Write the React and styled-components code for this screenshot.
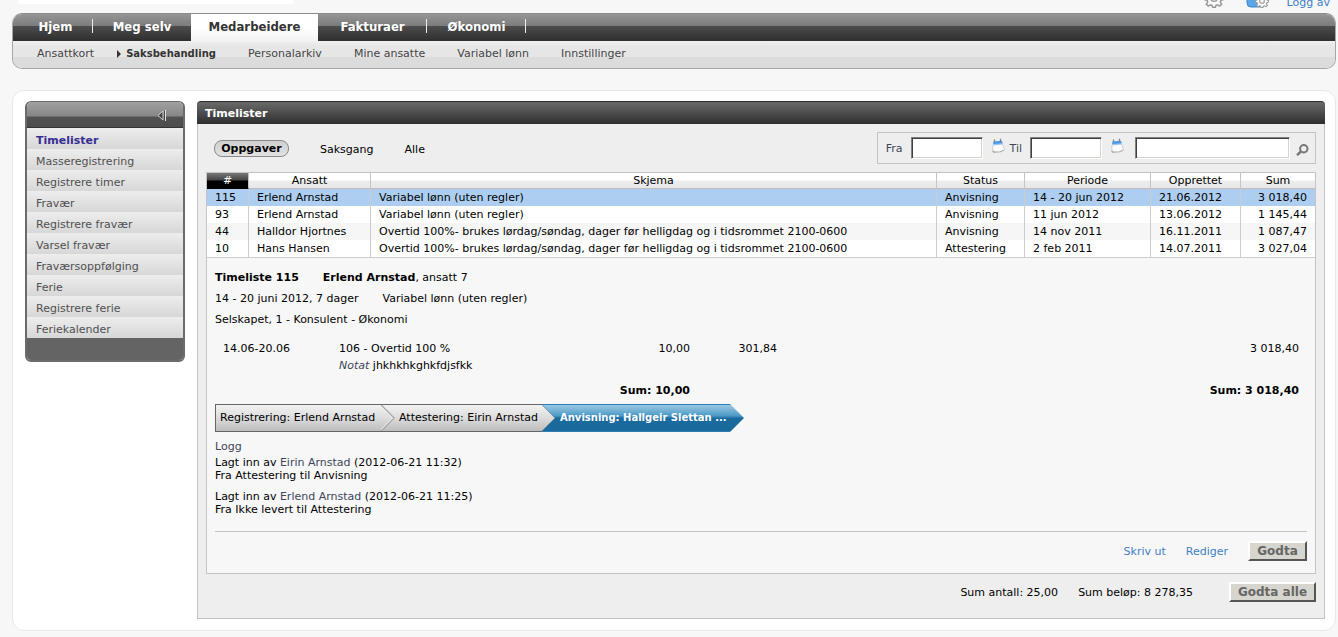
import React, { useState } from "react";
import styled, { createGlobalStyle, css } from "styled-components";

const tabs = [
  { label: "Hjem", width: 75, line: true },
  { label: "Meg selv", width: 98 },
  { label: "Medarbeidere", width: 127, active: true },
  { label: "Fakturaer", width: 109, line: true },
  { label: "Økonomi", width: 99, line: true },
];

const subTabs = [
  "Ansattkort",
  "Saksbehandling",
  "Personalarkiv",
  "Mine ansatte",
  "Variabel lønn",
  "Innstillinger",
];

const menu = [
  "Timelister",
  "Masseregistrering",
  "Registrere timer",
  "Fravær",
  "Registrere fravær",
  "Varsel fravær",
  "Fraværsoppfølging",
  "Ferie",
  "Registrere ferie",
  "Feriekalender",
];

const overtid =
  "Overtid 100%- brukes lørdag/søndag, dager før helligdag og i tidsrommet 2100-0600";

const rows = [
  ["115", "Erlend Arnstad", "Variabel lønn (uten regler)", "Anvisning", "14 - 20 jun 2012", "21.06.2012", "3 018,40"],
  ["93", "Erlend Arnstad", "Variabel lønn (uten regler)", "Anvisning", "11 jun 2012", "13.06.2012", "1 145,44"],
  ["44", "Halldor Hjortnes", overtid, "Anvisning", "14 nov 2011", "16.11.2011", "1 087,47"],
  ["10", "Hans Hansen", overtid, "Attestering", "2 feb 2011", "14.07.2011", "3 027,04"],
];

function Gear({ size = 20 }) {
  return (
    <svg width={size} height={size} viewBox="0 0 24 24" fill="#fafafa" stroke="#999" strokeWidth="1.8">
      <path d="M10 1h4l.6 3.500 2 .9L19.500 3.300 21.500 5.300 19.600 8.200l.9 2L23 11v3l-2.600.8-.9 2 1.700 2.700-2.400 2.200-2.500-1.600-1.900.8L13.700 23h-3.400l-.7-2.100-1.900-.8-2.500 1.600-2.400-2.200 1.700-2.700-.9-2L1 14v-3l2.500-.8.9-2L2.500 5.300l2-2 2.900 2.100 2-.9z" />
      <circle cx="12" cy="12" r="4" />
    </svg>
  );
}

function CalendarIcon() {
  return (
    <svg width="15" height="16" viewBox="0 0 15 16">
      <path d="M2.500 6h9.500l1.500 6-4 .5-1 1.500H1.500z" fill="#fcfcfc" />
      <path d="M1 13.500l1.200-1.500 1 1.200 5.500.3 3.800-1.800 1.200.8-3.700 1.800-7.500.6z" fill="#b4b4b4" />
      <path d="M11.800 6.500l1.700 5.500M1.800 7.500v5" stroke="#cdcdcd" fill="none" />
      <path d="M2 6.500l.5-3 8.500-.8.8 3z" fill="#4b96e4" />
      <path d="M2 6l9.800-.8.2 1.300-10 1z" fill="#9bc8f4" />
      <path d="M3.500 1.500v2.800M9.500 .8v2.800" stroke="#7d838c" strokeWidth="1.300" />
    </svg>
  );
}

function Magnifier() {
  return (
    <svg width="13" height="12" viewBox="0 0 13 12" fill="none" stroke="#777">
      <circle cx="7.800" cy="4.800" r="3.700" strokeWidth="2" />
      <path d="M5 7.500L1 11.200" strokeWidth="2.400" />
    </svg>
  );
}

export default function App() {
  const [from, setFrom] = useState("");
  const [to, setTo] = useState("");
  const [query, setQuery] = useState("");

  return (
    <>
      <GlobalStyle />
      <Top>
        <Logo>
          <svg width="30" height="16" viewBox="0 0 30 16">
            <ellipse cx="15" cy="4" rx="13" ry="9" fill="#c4c4c4" stroke="#999" />
          </svg>
        </Logo>
        <TopLinks>
          <Gear />
          <UserIcon>
            <svg width="14" height="20" viewBox="0 0 14 20">
              <path d="M1 8q0-4 6-4h7v15H5q-4 0-4-4z" fill="#5aa6ea" stroke="#3c86cc" />
            </svg>
            <Gear size={14} />
          </UserIcon>
          <BlueLink href="#logg-av">Logg av</BlueLink>
        </TopLinks>
      </Top>

      <Nav>
        <TabBar>
          {tabs.map((tab) => (
            <Tab key={tab.label} href="#" $width={tab.width} $active={tab.active} $line={tab.line}>
              {tab.label}
            </Tab>
          ))}
        </TabBar>
        <SubBar>
          {subTabs.map((label) => (
            <SubTab key={label} href="#" $active={label === "Saksbehandling"}>
              {label}
            </SubTab>
          ))}
        </SubBar>
      </Nav>

      <Panel>
        <Sidebar>
          <SidebarHead>
            <CollapseButton aria-label="Skjul meny">
              <svg width="10" height="11" viewBox="0 0 10 11">
                <path d="M6 1v9L1 5.500z" fill="#444" stroke="#d0d0d0" />
                <path d="M8.500 0v11" stroke="#e0e0e0" />
                <path d="M7.500 1v9" stroke="#444" />
              </svg>
            </CollapseButton>
          </SidebarHead>
          {menu.map((label) => (
            <MenuItem key={label} href="#" $active={label === "Timelister"}>
              {label}
            </MenuItem>
          ))}
          <SidebarFoot />
        </Sidebar>

        <Main>
          <Title>Timelister</Title>
          <Content>
            <Toolbar>
              <Filters>
                <Pill>Oppgaver</Pill>
                <Filter>Saksgang</Filter>
                <Filter>Alle</Filter>
              </Filters>
              <SearchBox onSubmit={(e) => e.preventDefault()}>
                <label htmlFor="from">Fra</label>
                <Field id="from" $width={72} value={from} onChange={(e) => setFrom(e.target.value)} />
                <IconButton type="button" aria-label="Velg fra-dato">
                  <CalendarIcon />
                </IconButton>
                <label htmlFor="to">Til</label>
                <Field id="to" $width={72} value={to} onChange={(e) => setTo(e.target.value)} />
                <IconButton type="button" aria-label="Velg til-dato">
                  <CalendarIcon />
                </IconButton>
                <Field aria-label="Søk" $width={155} value={query} onChange={(e) => setQuery(e.target.value)} />
                <SearchButton aria-label="Søk">
                  <Magnifier />
                </SearchButton>
              </SearchBox>
            </Toolbar>

            <Box>
              <List>
                <colgroup>
                  <Col $width={42} />
                  <Col $width={122} />
                  <Col />
                  <Col $width={88} />
                  <Col $width={126} />
                  <Col $width={90} />
                  <Col $width={74} />
                </colgroup>
                <thead>
                  <tr>
                    <HeadCell $dark>#</HeadCell>
                    <HeadCell>Ansatt</HeadCell>
                    <HeadCell>Skjema</HeadCell>
                    <HeadCell>Status</HeadCell>
                    <HeadCell>Periode</HeadCell>
                    <HeadCell>Opprettet</HeadCell>
                    <HeadCell>Sum</HeadCell>
                  </tr>
                </thead>
                <tbody>
                  {rows.map((row, i) => (
                    <Row key={row[0]} $selected={i === 0}>
                      {row.map((value, j) => (
                        <Cell key={j} $right={j === 6}>
                          {value}
                        </Cell>
                      ))}
                    </Row>
                  ))}
                </tbody>
              </List>

              <Detail>
                <InfoLine>
                  <b>Timeliste 115</b>
                  <span>
                    <b>Erlend Arnstad</b>, ansatt 7
                  </span>
                </InfoLine>
                <InfoLine>
                  <span>14 - 20 juni 2012, 7 dager</span>
                  <span>Variabel lønn (uten regler)</span>
                </InfoLine>
                <InfoLine>Selskapet, 1 - Konsulent - Økonomi</InfoLine>

                <Lines>
                  <colgroup>
                    <Col $width={116} />
                    <Col $width={283} />
                    <Col $width={84} />
                    <Col $width={87} />
                    <Col />
                  </colgroup>
                  <tbody>
                    <tr>
                      <LineCell>14.06-20.06</LineCell>
                      <LineCell>106 - Overtid 100 %</LineCell>
                      <LineCell $right>10,00</LineCell>
                      <LineCell $right>301,84</LineCell>
                      <LineCell $right>3 018,40</LineCell>
                    </tr>
                    <tr>
                      <LineCell />
                      <LineCell colSpan={4}>
                        <Note>Notat</Note> jhkhkhkghkfdjsfkk
                      </LineCell>
                    </tr>
                    <SumRow>
                      <LineCell colSpan={3} $right>
                        Sum: 10,00
                      </LineCell>
                      <LineCell colSpan={2} $right>
                        Sum: 3 018,40
                      </LineCell>
                    </SumRow>
                  </tbody>
                </Lines>

                <Steps>
                  <Step $width={166}>Registrering: Erlend Arnstad</Step>
                  <StepArrow>
                    <svg width="14" height="26" viewBox="0 0 14 26" fill="none">
                      <path d="M0 0l13 13L0 26" stroke="#a8a8a8" strokeWidth="1.500" />
                      <path d="M-1.500 0l13 13-13 13" stroke="#f4f4f4" />
                    </svg>
                  </StepArrow>
                  <Step $width={147}>Attestering: Eirin Arnstad</Step>
                  <StepArrow $blue>
                    <svg width="14" height="28" viewBox="0 0 14 28">
                      <defs>
                        <linearGradient id="greyStep" x1="0" y1="0" x2="0" y2="1">
                          <stop offset="0" stopColor="#f2f2f2" />
                          <stop offset=".5" stopColor="#dcdcdc" />
                          <stop offset="1" stopColor="#bdbdbd" />
                        </linearGradient>
                      </defs>
                      <path d="M0 1l13 13L0 27z" fill="url(#greyStep)" />
                      <path d="M0 1l13 13L0 27" fill="none" stroke="#707a80" strokeOpacity=".6" />
                    </svg>
                  </StepArrow>
                  <Step $width={174} $blue>
                    Anvisning: Hallgeir Slettan ...
                  </Step>
                  <StepArrow $blue $tip />
                </Steps>

                <LogTitle>Logg</LogTitle>
                <LogEntry>
                  Lagt inn av <Muted>Eirin Arnstad</Muted> (2012-06-21 11:32)
                  <br />
                  Fra Attestering til Anvisning
                </LogEntry>
                <LogEntry>
                  Lagt inn av <Muted>Erlend Arnstad</Muted> (2012-06-21 11:25)
                  <br />
                  Fra Ikke levert til Attestering
                </LogEntry>

                <Actions>
                  <BlueLink href="#skriv-ut">Skriv ut</BlueLink>
                  <BlueLink href="#rediger">Rediger</BlueLink>
                  <Button $width={59}>Godta</Button>
                </Actions>
              </Detail>
            </Box>

            <Totals>
              <span>Sum antall: 25,00</span>
              <span>Sum beløp: 8 278,35</span>
              <Button $width={87}>Godta alle</Button>
            </Totals>
          </Content>
        </Main>
      </Panel>
    </>
  );
}

const GlobalStyle = createGlobalStyle`
  * {
    box-sizing: border-box;
  }
  body {
    margin: 0;
    padding: 0 2px 6px 12px;
    background: #f7f7f7;
    color: #000;
    font-family: Verdana, "DejaVu Sans", sans-serif;
    font-size: 11px;
  }
  a {
    text-decoration: none;
  }
  button, input {
    font-family: inherit;
    font-size: inherit;
  }
  svg {
    display: block;
    flex: none;
  }
`;

const Top = styled.header`
  display: flex;
  justify-content: space-between;
  align-items: flex-end;
  height: 13px;
  padding: 0 6px;
  overflow: hidden;
`;

const Logo = styled.div`
  display: flex;
  align-items: flex-end;
  width: 275px;
  height: 60px;
  margin-bottom: 9px;
  padding: 0 14px 2px;
  background: #fff;
`;

const TopLinks = styled.div`
  display: flex;
  align-items: flex-end;
  gap: 18px;
  padding-bottom: 5px;
  a {
    margin-bottom: -1px;
  }
`;

const UserIcon = styled.span`
  display: flex;
  align-items: flex-end;
  margin-left: 4px;
  svg + svg {
    margin-left: -5px;
  }
`;

const BlueLink = styled.a`
  color: #3f7fc6;
`;

const Nav = styled.nav`
  border: 1px solid #a6a6a6;
  border-top-color: #8c8c8c;
  border-radius: 10px;
  overflow: hidden;
`;

const TabBar = styled.div`
  display: flex;
  height: 27px;
  padding-left: 5px;
  background: linear-gradient(#959595, #7c7c7c 44%, #4c4c4c 46%, #2e2e2e);
`;

const Tab = styled.a`
  display: flex;
  align-items: center;
  justify-content: center;
  width: ${(p) => p.$width}px;
  padding-bottom: 2px;
  color: #fff;
  font-family: Tahoma, "DejaVu Sans Condensed", "DejaVu Sans", sans-serif;
  font-size: 13px;
  font-weight: bold;
  ${(p) =>
    p.$line &&
    css`
      background: linear-gradient(#eee, #eee) right 5px / 1px 14px no-repeat;
    `}
  ${(p) =>
    p.$active &&
    css`
      background: linear-gradient(#fff, #fff 50%, #f3f3f3);
      color: #333;
    `}
`;

const SubBar = styled.div`
  display: flex;
  align-items: center;
  gap: 32px;
  height: 27px;
  padding: 0 24px 2px;
  background: linear-gradient(#f0f0f0, #e6e6e6 20%, #e6e6e6 58%, #dcdcdc 60%);
`;

const SubTab = styled.a`
  display: flex;
  align-items: center;
  color: #444;
  font-size: 11px;
  ${(p) =>
    p.$active &&
    css`
      color: #333;
      font-size: 10px;
      font-weight: bold;
      &::before {
        content: "";
        margin: 0 5px 0 -9px;
        border: 4px solid transparent;
        border-left-color: #333;
        border-right: 0;
      }
    `}
`;

const Panel = styled.div`
  display: flex;
  align-items: flex-start;
  gap: 12px;
  margin-top: 21px;
  padding: 10px 10px 11px 12px;
  background: #fff;
  border: 1px solid #e8e8e8;
  border-radius: 12px;
`;

const Sidebar = styled.aside`
  display: flex;
  flex-direction: column;
  width: 160px;
  flex: none;
  border: 2px solid #6b6b6b;
  border-top-width: 1px;
  border-radius: 6px;
  overflow: hidden;
`;

const SidebarHead = styled.div`
  display: flex;
  align-items: center;
  justify-content: flex-end;
  height: 26px;
  padding-right: 16px;
  background: linear-gradient(#a0a0a0, #868686 57%, #525252 59%, #4c4c4c);
  border-bottom: 1px solid #333;
`;

const CollapseButton = styled.button`
  padding: 2px 0 0;
  border: 0;
  background: none;
`;

const MenuItem = styled.a`
  height: 21px;
  padding: 4px 0 0 9px;
  line-height: 17px;
  background: linear-gradient(#ededed, #e2e2e2 50%, #d7d7d7);
  color: ${(p) => (p.$active ? "#362e92" : "#505050")};
  font-weight: ${(p) => (p.$active ? "bold" : "normal")};
`;

const SidebarFoot = styled.div`
  height: 22px;
  background: #646464;
`;

const Main = styled.main`
  flex: 1;
  min-width: 0;
`;

const Title = styled.h1`
  height: 23px;
  margin: 0;
  padding-left: 8px;
  border-top: 1px solid #2c2c2c;
  border-radius: 4px 4px 0 0;
  background: linear-gradient(#6a6a6a, #555 35%, #2e2e2e);
  color: #fff;
  font-size: 11px;
  line-height: 23px;
`;

const Content = styled.div`
  padding: 8px 8px 16px;
  background: #eee;
  border: 1px solid #c4c4c4;
  border-top: 0;
`;

const Toolbar = styled.div`
  display: flex;
  align-items: center;
  justify-content: space-between;
  margin-bottom: 8px;
`;

const Filters = styled.div`
  display: flex;
  align-items: center;
  gap: 31px;
  padding-left: 8px;
`;

const Filter = styled.button`
  padding: 2px 0 0;
  border: 0;
  background: none;
  color: #000;
`;

const Pill = styled.button`
  min-width: 75px;
  height: 17px;
  padding: 0 5px;
  border: 1px solid #8a8a8a;
  border-radius: 8px;
  background: linear-gradient(#cfcfcf, #e2e2e2);
  color: #000;
  font-weight: bold;
  line-height: 13px;
`;

const SearchBox = styled.form`
  display: flex;
  align-items: center;
  height: 32px;
  padding: 0 6px 0 8px;
  border: 1px solid #c4c4c4;
  color: #40465a;
`;

const Field = styled.input`
  width: ${(p) => p.$width}px;
  height: 22px;
  margin-left: 8px;
  padding: 1px 4px;
  border: 1px solid;
  border-color: #808080 #fff #fff #808080;
  box-shadow: inset 1px 1px #404040, inset -1px -1px #d6d4cc;
  background: #fff;
`;

const IconButton = styled.button`
  padding: 0 4px 4px 8px;
  border: 0;
  background: none;
  & + input {
    margin-left: 6px;
  }
`;

const SearchButton = styled.button`
  padding: 3px 0 0 6px;
  border: 0;
  background: none;
`;

const Box = styled.section`
  border: 1px solid #c4c4c4;
  background: #f7f7f7;
`;

const List = styled.table`
  width: 100%;
  table-layout: fixed;
  border-spacing: 0;
  border-bottom: 1px solid #ccc;
`;

const Col = styled.col`
  width: ${(p) => (p.$width ? `${p.$width}px` : "auto")};
`;

const HeadCell = styled.th`
  height: 16px;
  padding: 1px 0 0;
  border-right: 1px solid #c4c4c4;
  border-bottom: 1px solid ${(p) => (p.$dark ? "#000" : "#c4bcbc")};
  background: ${(p) =>
    p.$dark
      ? "linear-gradient(#777, #444 48%, #000 52%)"
      : "linear-gradient(#fff 45%, #ececec 55%, #e8e8e8)"};
  color: ${(p) => (p.$dark ? "#fff" : "#000")};
  font-weight: normal;
  line-height: 14px;
  &:last-child {
    border-right: 0;
  }
`;

const Row = styled.tr`
  background: #fff;
  &:nth-child(3) {
    background: #f6f6f6;
  }
  ${(p) =>
    p.$selected &&
    css`
      && {
        background: #adcef0;
      }
    `}
`;

const Cell = styled.td`
  height: 17px;
  padding: 1px 8px 0;
  border-right: 1px solid #ccc;
  line-height: 16px;
  text-align: ${(p) => (p.$right ? "right" : "left")};
  white-space: nowrap;
  &:last-child {
    border-right: 0;
  }
`;

const Detail = styled.div`
  padding: 9px 8px 12px;
`;

const InfoLine = styled.div`
  display: flex;
  gap: 24px;
  line-height: 21px;
`;

const Lines = styled.table`
  width: 100%;
  margin: 10px 0 5px;
  table-layout: fixed;
  border-spacing: 0;
`;

const LineCell = styled.td`
  padding: 0 8px;
  line-height: 17px;
  text-align: ${(p) => (p.$right ? "right" : "left")};
  white-space: nowrap;
`;

const SumRow = styled.tr`
  font-weight: bold;
  td {
    padding-top: 8px;
  }
`;

const Note = styled.i`
  color: #40465a;
`;

const Steps = styled.div`
  display: flex;
  height: 28px;
  font-size: 11px;
`;

const stepFill = css`
  background: ${(p) =>
    p.$blue
      ? "linear-gradient(#9cc8e2, #4f9cc8 40%, #1b6a9e 52%, #1b6a9e)"
      : "linear-gradient(#f2f2f2, #dcdcdc 50%, #bdbdbd)"};
  border: 0 solid ${(p) => (p.$blue ? "#2a80b4" : "#666")};
  border-width: 1px 0;
`;

const Step = styled.div`
  ${stepFill}
  width: ${(p) => p.$width}px;
  padding-left: 4px;
  line-height: 25px;
  white-space: nowrap;
  color: ${(p) => (p.$blue ? "#fff" : "#000")};
  font-size: ${(p) => (p.$blue ? "10px" : "11px")};
  font-weight: ${(p) => (p.$blue ? "bold" : "normal")};
  &:first-child {
    border-left-width: 1px;
  }
`;

const StepArrow = styled.span`
  ${stepFill}
  width: 14px;
  svg {
    margin-top: ${(p) => (p.$blue ? "-1px" : "0")};
  }
  clip-path: ${(p) => (p.$tip ? "polygon(0 0, 100% 50%, 0 100%)" : "none")};
`;

const LogTitle = styled.h2`
  margin: 7px 0 2px;
  color: #40465a;
  font-size: 11px;
  font-weight: normal;
  line-height: 15px;
`;

const LogEntry = styled.p`
  margin: 0 0 8px;
  line-height: 13px;
`;

const Muted = styled.span`
  color: #40465a;
`;

const Actions = styled.div`
  display: flex;
  align-items: center;
  justify-content: flex-end;
  gap: 20px;
  margin-top: 15px;
  padding-top: 9px;
  border-top: 1px solid #c4c4c4;
`;

const Button = styled.button`
  width: ${(p) => p.$width}px;
  height: 20px;
  padding: 0;
  border: 2px solid;
  border-color: #fff #555 #555 #fff;
  background: #d6d6ce;
  color: #666;
  font-size: 12px;
  font-weight: bold;
`;

const Totals = styled.div`
  display: flex;
  align-items: center;
  justify-content: flex-end;
  gap: 20px;
  margin-top: 8px;
  button {
    margin-left: 16px;
  }
`;
